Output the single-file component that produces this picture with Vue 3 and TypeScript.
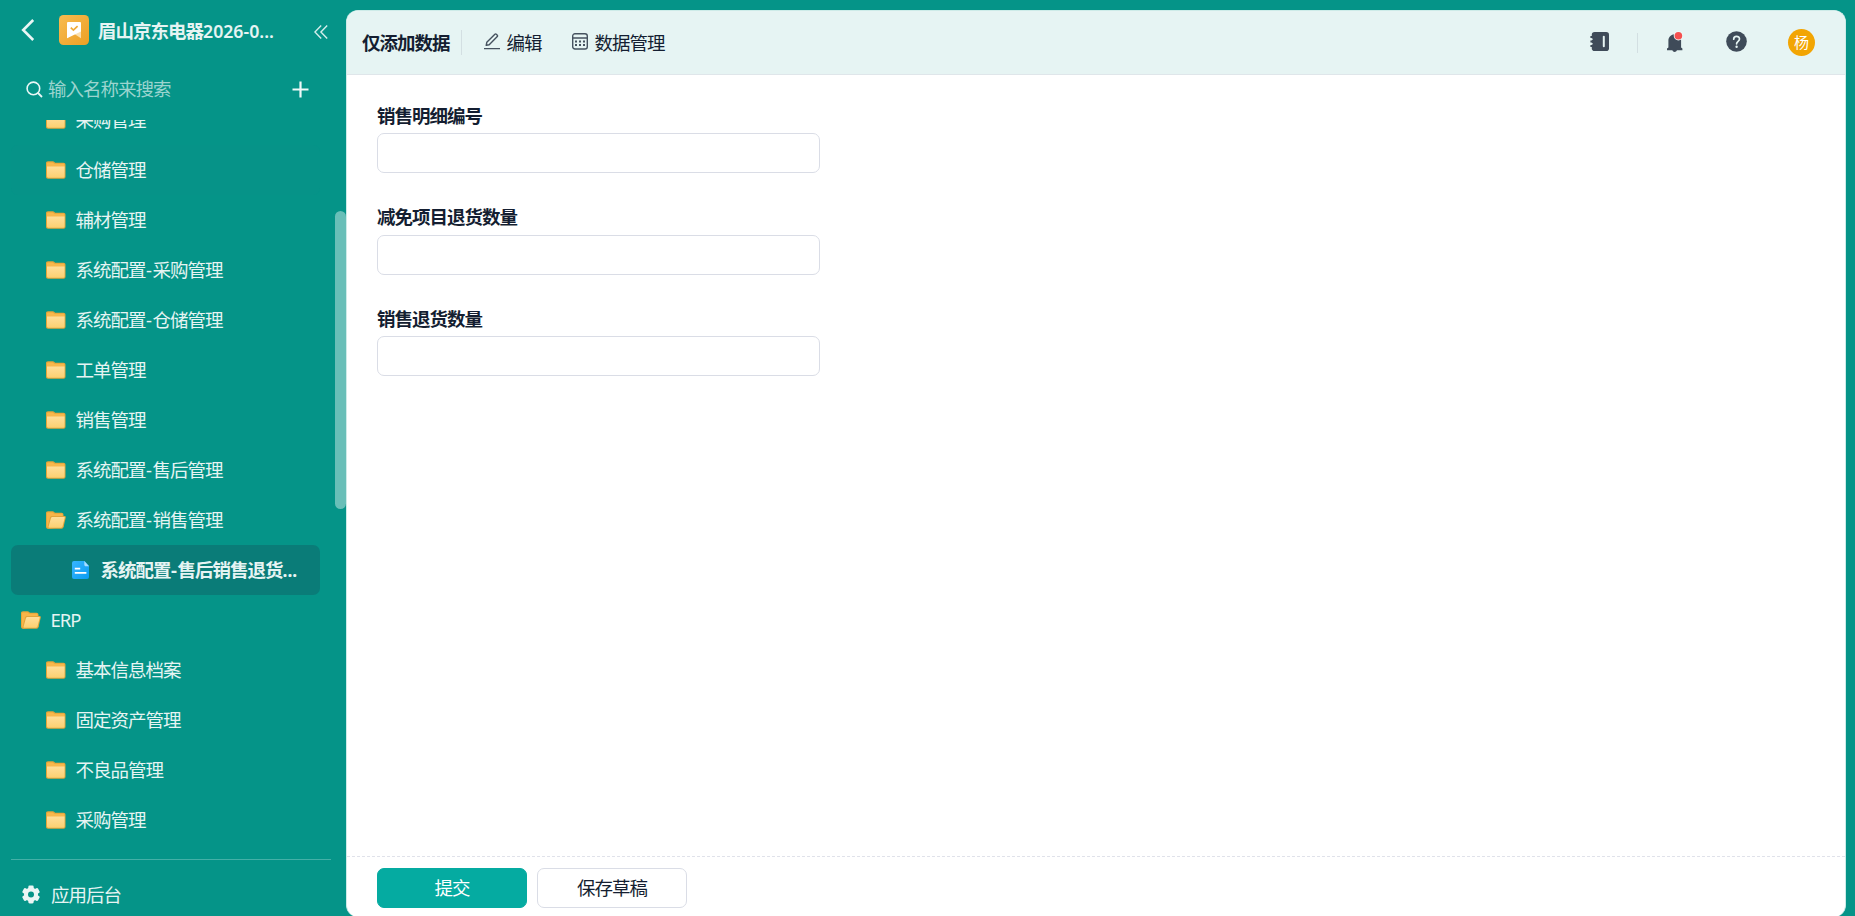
<script setup lang="ts">
type IconKind = 'folder' | 'open' | 'doc'

interface NavItem {
  parts: string[]
  level: number
  icon: IconKind
  ellipsis?: boolean
  state?: 'hover' | 'active'
}

const items: NavItem[] = [
  { parts: ['采购管理'], level: 2, icon: 'folder' },
  { parts: ['仓储管理'], level: 2, icon: 'folder', state: 'hover' },
  { parts: ['辅材管理'], level: 2, icon: 'folder' },
  { parts: ['系统配置', '采购管理'], level: 2, icon: 'folder' },
  { parts: ['系统配置', '仓储管理'], level: 2, icon: 'folder' },
  { parts: ['工单管理'], level: 2, icon: 'folder' },
  { parts: ['销售管理'], level: 2, icon: 'folder' },
  { parts: ['系统配置', '售后管理'], level: 2, icon: 'folder' },
  { parts: ['系统配置', '销售管理'], level: 2, icon: 'open' },
  { parts: ['系统配置', '售后销售退货'], level: 3, icon: 'doc', ellipsis: true, state: 'active' },
  { parts: ['ERP'], level: 1, icon: 'open' },
  { parts: ['基本信息档案'], level: 2, icon: 'folder' },
  { parts: ['固定资产管理'], level: 2, icon: 'folder' },
  { parts: ['不良品管理'], level: 2, icon: 'folder' },
  { parts: ['采购管理'], level: 2, icon: 'folder' },
]

const fields: string[] = ['销售明细编号', '减免项目退货数量', '销售退货数量']
</script>

<template>
  <div class="app">
    <svg class="defs" width="0" height="0">
      <defs>
        <linearGradient id="gFront" x1="0" y1="0" x2="0" y2="1">
          <stop offset="0" stop-color="#ffdf9b" />
          <stop offset="1" stop-color="#fcd071" />
        </linearGradient>
        <linearGradient id="gLogo" x1="0" y1="0" x2="1" y2="1">
          <stop offset="0" stop-color="#f8bb50" />
          <stop offset="1" stop-color="#eca024" />
        </linearGradient>
        <linearGradient id="gDoc" x1="0" y1="0" x2="1" y2="1">
          <stop offset="0" stop-color="#37b6ff" />
          <stop offset="1" stop-color="#0a9cf2" />
        </linearGradient>
      </defs>
    </svg>

    <aside class="sidebar">
      <div class="brand">
        <svg class="back" width="14" height="22" viewBox="0 0 14 22">
          <path d="M12.2 1 2.200 11l10 10" fill="none" stroke="#e9f6f5" stroke-width="2.600" />
        </svg>
        <svg class="logo" width="30" height="30" viewBox="0 0 30 30">
          <rect width="30" height="30" rx="4.500" fill="url(#gLogo)" />
          <path d="M8 15h14v8.200l-7-4.400-7 4.400z" fill="#fbe0ae" />
          <path d="M9 7h12a1 1 0 0 1 1 1v8.600L8 23.200V8a1 1 0 0 1 1-1z" fill="#fff" />
          <path d="m11.800 12.600 2.600 2.500 4.200-4" fill="none" stroke="#f0ab38" stroke-width="1.700" />
        </svg>
        <span class="title">眉山京东电器<span class="latin">2026-0...</span></span>
        <svg class="collapse" width="14" height="14" viewBox="0 0 14 14">
          <path d="M7.200.6.9 7l6.300 6.400M13.200.6 6.900 7l6.300 6.400" fill="none" stroke="#d5eeec" stroke-width="1.400" />
        </svg>
      </div>

      <div class="search">
        <svg class="glass" width="17" height="17" viewBox="0 0 17 17">
          <circle cx="7.400" cy="7.400" r="6.300" fill="none" stroke="#eaf7f6" stroke-width="1.600" />
          <path d="m12 12 4 4" stroke="#eaf7f6" stroke-width="1.800" />
        </svg>
        <span class="hint">输入名称来搜索</span>
        <svg class="plus" width="17" height="17" viewBox="0 0 17 17">
          <path d="M8.500.5v16M.5 8.500h16" stroke="#eef9f8" stroke-width="2.200" />
        </svg>
      </div>

      <nav class="tree">
        <div class="tree-inner">
          <div
            v-for="(item, i) in items"
            :key="i"
            class="row"
            :class="['level-' + item.level, item.state]"
          >
            <svg v-if="item.icon === 'folder'" class="icon" width="20" height="18" viewBox="0 0 20 18">
              <path d="M0 2.200C0 1 .8.3 2 .3h4.800c.7 0 1.100.3 1.600.8l.7.6h8.400c1.200 0 2 .8 2 2v12c0 1.200-.8 2-2 2H2c-1.200 0-2-.8-2-2z" fill="#e3a53a" />
              <path d="M1 2.800C1 1.900 1.500 1.400 2.400 1.400h4.200l1.800 1.400h8.600c.9 0 1.500.5 1.500 1.400v2H1z" fill="#f8b84c" />
              <path d="M1 5.400h17.600v9.800c0 .9-.6 1.500-1.500 1.500H2.500c-.9 0-1.500-.6-1.500-1.500z" fill="url(#gFront)" />
            </svg>
            <svg v-else-if="item.icon === 'open'" class="icon" width="20" height="18" viewBox="0 0 20 18">
              <path d="M0 2.200C0 1 .8.3 2 .3h4.600c.7 0 1.100.3 1.600.8l.7.6h6.600c1.200 0 2 .8 2 2V16L3 17.700H2c-1.200 0-2-.8-2-2z" fill="#e5a638" />
              <path d="M1 2.800C1 1.900 1.500 1.400 2.400 1.400h4l1.800 1.400h7c.9 0 1.500.5 1.500 1.400v8L2 16.500H1z" fill="#f8b549" />
              <path d="M6 5h12.500c1 0 1.500.6 1.300 1.500L17.500 16c-.3 1.100-.9 1.700-2 1.700H2.200c-.8 0-1-.4-.8-1.200L4 6.500C4.300 5.500 5 5 6 5z" fill="#e0a53c" />
              <path d="M6.300 5.900h11.600c.8 0 1 .4.8 1.100l-2.200 8.600c-.2.800-.7 1.100-1.500 1.100H3.200c-.7 0-.9-.3-.7-.9l2.500-8.900c.2-.6.600-1 1.300-1z" fill="url(#gFront)" />
            </svg>
            <svg v-else class="icon doc" width="17" height="18" viewBox="0 0 17 18">
              <path d="M2 0h10.500L17 4.800V16a2 2 0 0 1-2 2H2a2 2 0 0 1-2-2V2a2 2 0 0 1 2-2z" fill="url(#gDoc)" />
              <path d="M12.300 0 17 5.200h-3.200c-1 0-1.500-.6-1.500-1.500z" fill="#a9deff" />
              <path d="M2.800 7.600h5.400M2.800 11.800h11.600" stroke="#fff" stroke-width="1.700" />
            </svg>
            <span class="label">
              <template v-for="(part, j) in item.parts" :key="j"><span v-if="j > 0" class="dash">-</span>{{ part }}</template><span v-if="item.ellipsis" class="dots">...</span>
            </span>
          </div>
        </div>
        <div class="thumb"></div>
      </nav>

      <div class="admin">
        <svg class="gear" width="18" height="19" viewBox="-9 -9.500 18 19">
          <g fill="#eaf6f5">
            <rect v-for="a in [0, 60, 120]" :key="a" x="-2.700" y="-9" width="5.400" height="18" rx="1.400" :transform="'rotate(' + a + ')'" />
            <circle r="7" />
          </g>
          <circle r="3" fill="#059488" />
        </svg>
        <span>应用后台</span>
      </div>
    </aside>

    <main class="panel">
      <header class="bar">
        <h1>仅添加数据</h1>
        <i class="sep"></i>
        <a class="tool edit">
          <svg width="16" height="17" viewBox="0 0 16 17">
            <path d="M0 15.600h16M2.200 12.300l.6-3L10.900 1.200q.7-.7 1.400 0l1 1q.7.7 0 1.400L5.200 11.700z" fill="none" stroke="#46525f" stroke-width="1.400" stroke-linejoin="round" />
          </svg>
          <span>编辑</span>
        </a>
        <a class="tool">
          <svg width="16" height="17" viewBox="0 0 16 17">
            <rect x=".7" y=".7" width="14.600" height="15.300" rx="2.300" fill="none" stroke="#46525f" stroke-width="1.400" />
            <path d="M.7 5h14.600" stroke="#46525f" stroke-width="1.300" />
            <path d="M3 8.500h10M3 12h10" stroke="#46525f" stroke-width="2" stroke-dasharray="2 2" />
          </svg>
          <span>数据管理</span>
        </a>
        <div class="actions">
          <svg class="book" width="20" height="19" viewBox="0 0 20 19">
            <rect x="1.800" y="0" width="17.200" height="19" rx="2.800" fill="#3f4b59" />
            <path d="M0 7.250h2.600M0 11.750h2.600" stroke="#e6f4f3" stroke-width="1.500" />
            <path d="M.4 5h3M.4 9.500h3M.4 14h3" stroke="#3f4b59" stroke-width="1.900" />
            <path d="M13.800 4.800v9.400" stroke="#e6f4f3" stroke-width="2" stroke-linecap="round" />
          </svg>
          <i class="sep small"></i>
          <svg class="bell" width="17" height="22" viewBox="0 0 17 22">
            <path d="M8 3.200C3.800 3.400 1.400 6.200 1.400 9.600v7L0 17.600v1.600h5.400c.3 1.100 1.200 1.700 2.200 1.700s2-.6 2.300-1.700h5.500v-1.600l-1.300-1v-7C14.100 6 12 3.300 8 3.200z" fill="#3f4b59" />
            <circle cx="11.400" cy="4.700" r="4.700" fill="#eef8f7" />
            <circle cx="11.400" cy="4.700" r="3.800" fill="#f5504f" />
          </svg>
          <svg class="help" width="21" height="21" viewBox="0 0 21 21">
            <circle cx="10.500" cy="10.500" r="10.300" fill="#3f4b59" />
            <path d="M7.700 8.200c0-3.800 5.800-3.700 5.800-.2 0 2.200-2.900 2.400-2.900 4.800" fill="none" stroke="#e6f4f3" stroke-width="1.700" stroke-linecap="round" />
            <circle cx="10.600" cy="15.800" r="1.200" fill="#e6f4f3" />
          </svg>
          <span class="avatar">杨</span>
        </div>
      </header>

      <section class="form">
        <label v-for="field in fields" :key="field" class="field">
          <span class="caption">{{ field }}</span>
          <input type="text" />
        </label>
      </section>

      <footer class="foot">
        <button class="btn primary" type="button">提交</button>
        <button class="btn" type="button">保存草稿</button>
      </footer>
    </main>
  </div>
</template>

<style>
body {
  margin: 0;
  overflow: hidden;
}
</style>

<style scoped>
* {
  box-sizing: border-box;
}

.app {
  display: flex;
  width: 1855px;
  height: 916px;
  overflow: hidden;
  background: #059488;
  font-family: "Noto Sans", "Noto Sans CJK SC", sans-serif;
  font-size: 18.5px;
  letter-spacing: -1px;
  line-height: 24px;
  color: #141e31;
}

svg {
  display: block;
  flex: none;
}

.defs {
  position: absolute;
}

.sidebar {
  display: flex;
  flex-direction: column;
  flex: none;
  width: 346px;
  color: #e6f4f3;
}

.brand {
  display: flex;
  align-items: center;
  flex: none;
  height: 60px;
  padding-left: 21px;
}

.logo {
  margin-left: 24px;
}

.title {
  width: 186px;
  margin: 2px 0 0 9px;
  font-weight: 700;
  white-space: nowrap;
}

.latin {
  font-size: 17.7px;
  font-weight: 600;
  letter-spacing: 0;
}

.collapse {
  margin: 3px 0 0 30px;
}

.search {
  display: flex;
  align-items: center;
  flex: none;
  height: 60px;
  padding: 0 0 2px 26px;
}

.hint {
  width: 235px;
  margin-left: 5px;
  color: #9bd4cf;
}

.plus {
  margin-left: 8.5px;
}

.tree {
  position: relative;
  flex: none;
  height: 739px;
  overflow: hidden;
}

.tree-inner {
  margin-top: -25px;
}

.row {
  display: flex;
  align-items: center;
  width: 309px;
  height: 50px;
  margin-left: 11px;
  border-radius: 7px;
}

.level-1 {
  padding-left: 10px;
}

.level-2 {
  padding-left: 35px;
}

.level-3 {
  padding-left: 61px;
}

.hover {
  background: #069388;
}

.active {
  background: #0a7c78;
  font-weight: 700;
}

.label {
  margin-left: 9.5px;
  white-space: nowrap;
}

.doc + .label {
  margin-left: 11.5px;
}

.dash {
  display: inline-block;
  width: 7px;
  letter-spacing: 0;
  text-align: center;
}

.dots {
  font-size: 17.5px;
  letter-spacing: 0;
}

.thumb {
  position: absolute;
  top: 91px;
  right: 0;
  width: 11px;
  height: 298px;
  border-radius: 6px;
  background: #69bfb8;
}

.admin {
  display: flex;
  align-items: center;
  flex: none;
  gap: 11px;
  width: 320px;
  height: 70px;
  margin-left: 11px;
  padding-left: 11px;
  border-top: 1px solid #44b0a7;
}

.panel {
  display: flex;
  flex-direction: column;
  width: 1500px;
  height: 907px;
  margin-top: 10px;
  border: 1px solid #cdebe8;
  border-bottom: 0;
  border-radius: 12px;
  overflow: hidden;
  background: #fff;
}

.bar {
  display: flex;
  align-items: center;
  flex: none;
  height: 64px;
  padding: 0 30px 0 15px;
  border-bottom: 1px solid #dfe6ea;
  background: #e6f4f3;
}

h1 {
  margin: 0;
  font-size: 18.5px;
  font-weight: 700;
  line-height: 24px;
}

.sep {
  width: 1px;
  height: 25px;
  margin-left: 11.5px;
  background: #d3dfe2;
}

.tool {
  display: flex;
  align-items: center;
  gap: 7px;
  margin-left: 30px;
}

.edit {
  margin-left: 21.5px;
}

.tool svg {
  margin-top: -2px;
}

.tool span {
  margin-top: 1px;
}

.actions {
  display: flex;
  align-items: center;
  margin-left: auto;
}

.book {
  margin-top: -2px;
}

.sep.small {
  height: 20px;
  margin-left: 27px;
}

.bell {
  margin: -2px 0 0 29px;
}

.help {
  margin: -2px 0 0 42px;
}

.avatar {
  width: 27px;
  height: 27px;
  margin-left: 41px;
  border-radius: 50%;
  background: #f2a503;
  color: #fff;
  font-size: 15px;
  letter-spacing: 0;
  line-height: 27px;
  text-align: center;
}

.form {
  display: flex;
  flex: 1;
  flex-direction: column;
  gap: 30px;
  padding: 29px 0 0 30px;
}

.field {
  display: flex;
  flex-direction: column;
  gap: 4px;
  width: 443px;
}

.field + .field {
  padding-top: 2px;
}

.caption {
  height: 25.3px;
  font-weight: 700;
}

input {
  width: 443px;
  height: 40px;
  border: 1px solid #dadde6;
  border-radius: 7px;
  background: #fff;
}

.foot {
  display: flex;
  flex: none;
  gap: 10px;
  height: 61px;
  padding: 11px 0 0 30px;
  border-top: 1px dashed #e0e2ea;
}

.btn {
  width: 150px;
  height: 40px;
  padding: 0;
  border: 1px solid #dadde6;
  border-radius: 7px;
  background: #fff;
  color: #141e31;
  font: inherit;
  letter-spacing: -1px;
}

.primary {
  border-color: #05aba1;
  background: #05aba1;
  color: #fff;
}
</style>
